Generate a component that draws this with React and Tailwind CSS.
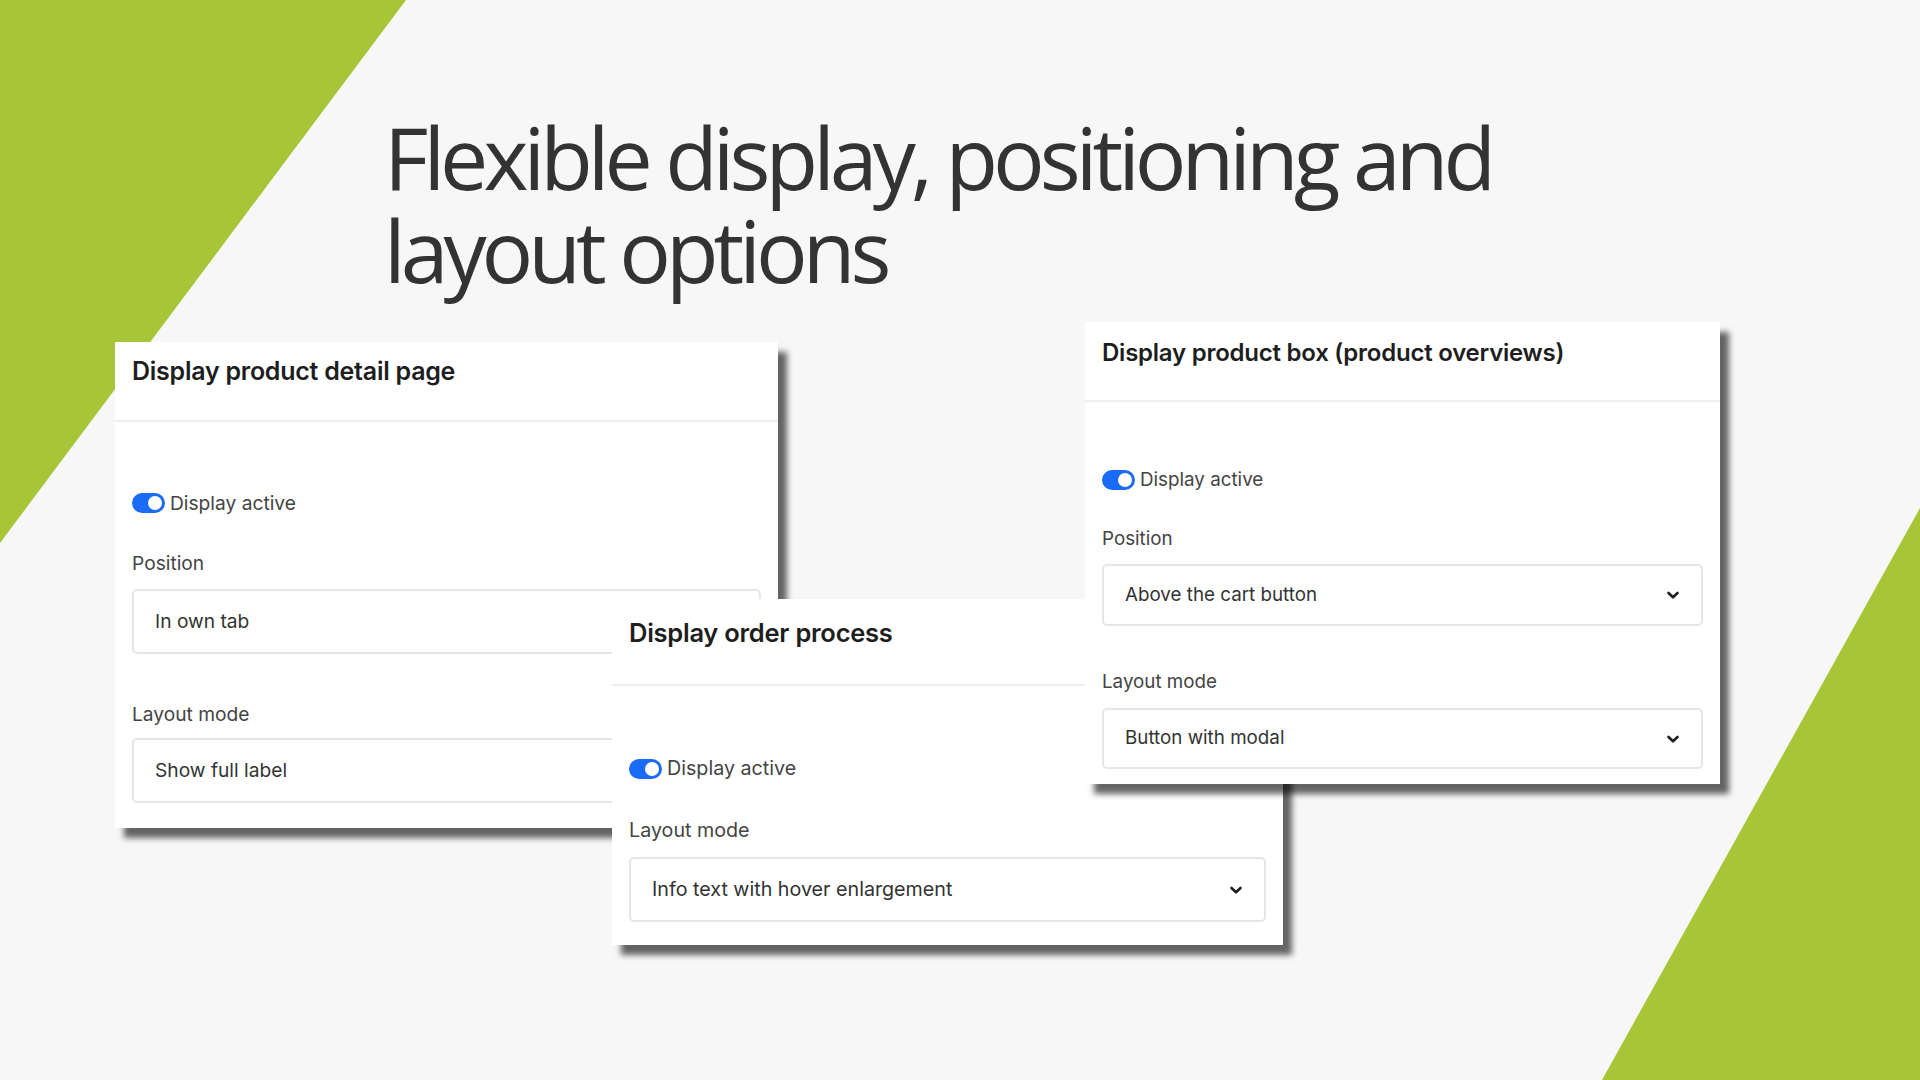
import React from 'react';

const GREEN = '#a6c637';

function Toggle() {
  return (
    <span className="relative inline-flex h-[20px] w-[33px] shrink-0 items-center rounded-full bg-[#1a6cf6]">
      <span className="absolute right-[3px] h-[14px] w-[14px] rounded-full bg-white" />
    </span>
  );
}

function Chevron() {
  return (
    <svg width="14" height="10" viewBox="0 0 14 10" fill="none">
      <path
        d="M2.5 3l4.5 4.3 4.5-4.3"
        stroke="#1f1f1f"
        strokeWidth="2.6"
        strokeLinecap="round"
        strokeLinejoin="round"
      />
    </svg>
  );
}

function SelectBox({ value, className }) {
  return (
    <div
      className={`flex items-center justify-between rounded-[5px] border-2 border-[#e6e6e6] bg-white pl-[21px] pr-[21px] text-[#333] ${className}`}
    >
      <span>{value}</span>
      <Chevron />
    </div>
  );
}

function Label({ children, className }) {
  return (
    <div className={`h-[24px] leading-[24px] text-[#444] ${className}`}>
      {children}
    </div>
  );
}

function Panel({ title, className, titleSize, textSize, headerClass, bodyClass, children }) {
  return (
    <div
      className={`absolute flex flex-col bg-white shadow-[9px_10px_6px_rgba(0,0,0,0.6)] ${textSize} ${className}`}
    >
      <div className={`border-b-2 border-[#eeeeee] px-[17px] ${headerClass}`}>
        <div className={`font-semibold leading-[30px] tracking-[-0.01em] text-[#1e1e1e] ${titleSize}`}>
          {title}
        </div>
      </div>
      <div className={`flex flex-col px-[17px] ${bodyClass}`}>
        <div className="flex h-[22px] items-center gap-[5px] text-[#444]">
          <Toggle />
          <span>Display active</span>
        </div>
        {children}
      </div>
    </div>
  );
}

export default function App() {
  return (
    <div
      className="relative h-[1080px] w-[1920px] overflow-hidden bg-[#f7f7f7]"
      style={{ fontFamily: 'Inter, "Liberation Sans", sans-serif' }}
    >
      <svg
        className="absolute left-0 top-0"
        width="1920"
        height="1080"
        viewBox="0 0 1920 1080"
      >
        <polygon points="0,0 406,0 0,543" fill={GREEN} />
        <polygon points="1920,508 1920,1080 1602,1080" fill={GREEN} />
      </svg>

      <div className="relative pl-[384px] pt-[110px]">
        <h1
          className="text-[86px] font-normal leading-[93px] tracking-[-0.058em] text-[#333]"
          style={{ fontFamily: '"Open Sans", "Noto Sans", sans-serif' }}
        >
          Flexible display, positioning and
          <br />
          layout options
        </h1>
      </div>

      <Panel
        title="Display product detail page"
        className="left-[115px] top-[342px] h-[486px] w-[663px]"
        titleSize="text-[25px]"
        textSize="text-[19.2px]"
        headerClass="h-[80px] pt-[14px]"
        bodyClass="pt-[70px]"
      >
        <Label className="mt-[37px]">Position</Label>
        <SelectBox value="In own tab" className="mt-[14px] h-[65px]" />
        <Label className="mt-[48px]">Layout mode</Label>
        <SelectBox value="Show full label" className="mt-[12px] h-[65px]" />
      </Panel>

      <Panel
        title="Display order process"
        className="left-[612px] top-[599px] h-[346px] w-[671px]"
        titleSize="text-[25.5px]"
        textSize="text-[19.7px]"
        headerClass="h-[87px] pt-[19px]"
        bodyClass="pt-[72px]"
      >
        <Label className="mt-[38px]">Layout mode</Label>
        <SelectBox
          value="Info text with hover enlargement"
          className="mt-[15px] h-[65px]"
        />
      </Panel>

      <Panel
        title="Display product box (product overviews)"
        className="left-[1085px] top-[322px] h-[462px] w-[635px]"
        titleSize="text-[24px]"
        textSize="text-[18.8px]"
        headerClass="h-[80px] pt-[16px]"
        bodyClass="pt-[67px]"
      >
        <Label className="mt-[36px]">Position</Label>
        <SelectBox value="Above the cart button" className="mt-[13px] h-[62px]" />
        <Label className="mt-[44px]">Layout mode</Label>
        <SelectBox value="Button with modal" className="mt-[14px] h-[61px]" />
      </Panel>
    </div>
  );
}
